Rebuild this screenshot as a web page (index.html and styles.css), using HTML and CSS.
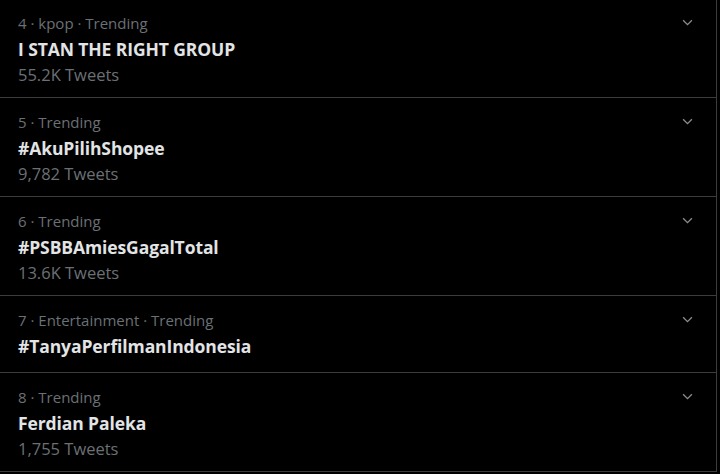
FILE: index.html
```html
<!DOCTYPE html>
<html>
<head>
<meta charset="utf-8">
<link rel="stylesheet" href="styles.css">
</head>
<body>
<div class="list">
  <div class="row">
    <div class="text">
      <div class="meta">4 · kpop · Trending</div>
      <div class="title">I STAN THE RIGHT GROUP</div>
      <div class="count">55.2K Tweets</div>
    </div>
    <svg class="chev" viewBox="0 0 12 8"><path d="M1 1.5 L6 6.5 L11 1.5" fill="none" stroke="currentColor" stroke-width="1.5"/></svg>
  </div>
  <div class="row">
    <div class="text">
      <div class="meta">5 · Trending</div>
      <div class="title">#AkuPilihShopee</div>
      <div class="count">9,782 Tweets</div>
    </div>
    <svg class="chev" viewBox="0 0 12 8"><path d="M1 1.5 L6 6.5 L11 1.5" fill="none" stroke="currentColor" stroke-width="1.5"/></svg>
  </div>
  <div class="row">
    <div class="text">
      <div class="meta">6 · Trending</div>
      <div class="title">#PSBBAmiesGagalTotal</div>
      <div class="count">13.6K Tweets</div>
    </div>
    <svg class="chev" viewBox="0 0 12 8"><path d="M1 1.5 L6 6.5 L11 1.5" fill="none" stroke="currentColor" stroke-width="1.5"/></svg>
  </div>
  <div class="row row-short">
    <div class="text">
      <div class="meta">7 · Entertainment · Trending</div>
      <div class="title">#TanyaPerfilmanIndonesia</div>
    </div>
    <svg class="chev" viewBox="0 0 12 8"><path d="M1 1.5 L6 6.5 L11 1.5" fill="none" stroke="currentColor" stroke-width="1.5"/></svg>
  </div>
  <div class="row">
    <div class="text">
      <div class="meta">8 · Trending</div>
      <div class="title">Ferdian Paleka</div>
      <div class="count">1,755 Tweets</div>
    </div>
    <svg class="chev" viewBox="0 0 12 8"><path d="M1 1.5 L6 6.5 L11 1.5" fill="none" stroke="currentColor" stroke-width="1.5"/></svg>
  </div>
</div>
</body>
</html>
```
FILE: styles.css
```css
html, body {
  margin: 0;
  padding: 0;
  background: #000;
}
body {
  width: 720px;
  height: 474px;
  overflow: hidden;
  font-family: "Open Sans", "Noto Sans", sans-serif;
}
.list {
  width: 716px;
  margin-top: -2px;
  border-right: 1px solid #3a3d40;
  border-bottom: 1px solid #3a3d40;
}
.row {
  display: flex;
  justify-content: space-between;
  align-items: flex-start;
  padding: 12px 23px 10px 18px;
  border-bottom: 1px solid #3a3d40;
}
.row:first-child {
  padding-top: 13px;
}
.row:last-child {
  border-bottom: none;
}
.row-short {
  padding-bottom: 12px;
}
.text {
  display: flex;
  flex-direction: column;
}
.meta {
  font-size: 15px;
  line-height: 25px;
  color: #6b7075;
}
.title {
  font-size: 17.5px;
  line-height: 27px;
  font-weight: 700;
  color: #e2e4e6;
  letter-spacing: -0.1px;
}
.count {
  font-size: 16.5px;
  line-height: 24px;
  color: #6b7075;
}
.chev {
  width: 11px;
  height: 7px;
  margin-top: 8px;
  color: #8a8e92;
}
```
